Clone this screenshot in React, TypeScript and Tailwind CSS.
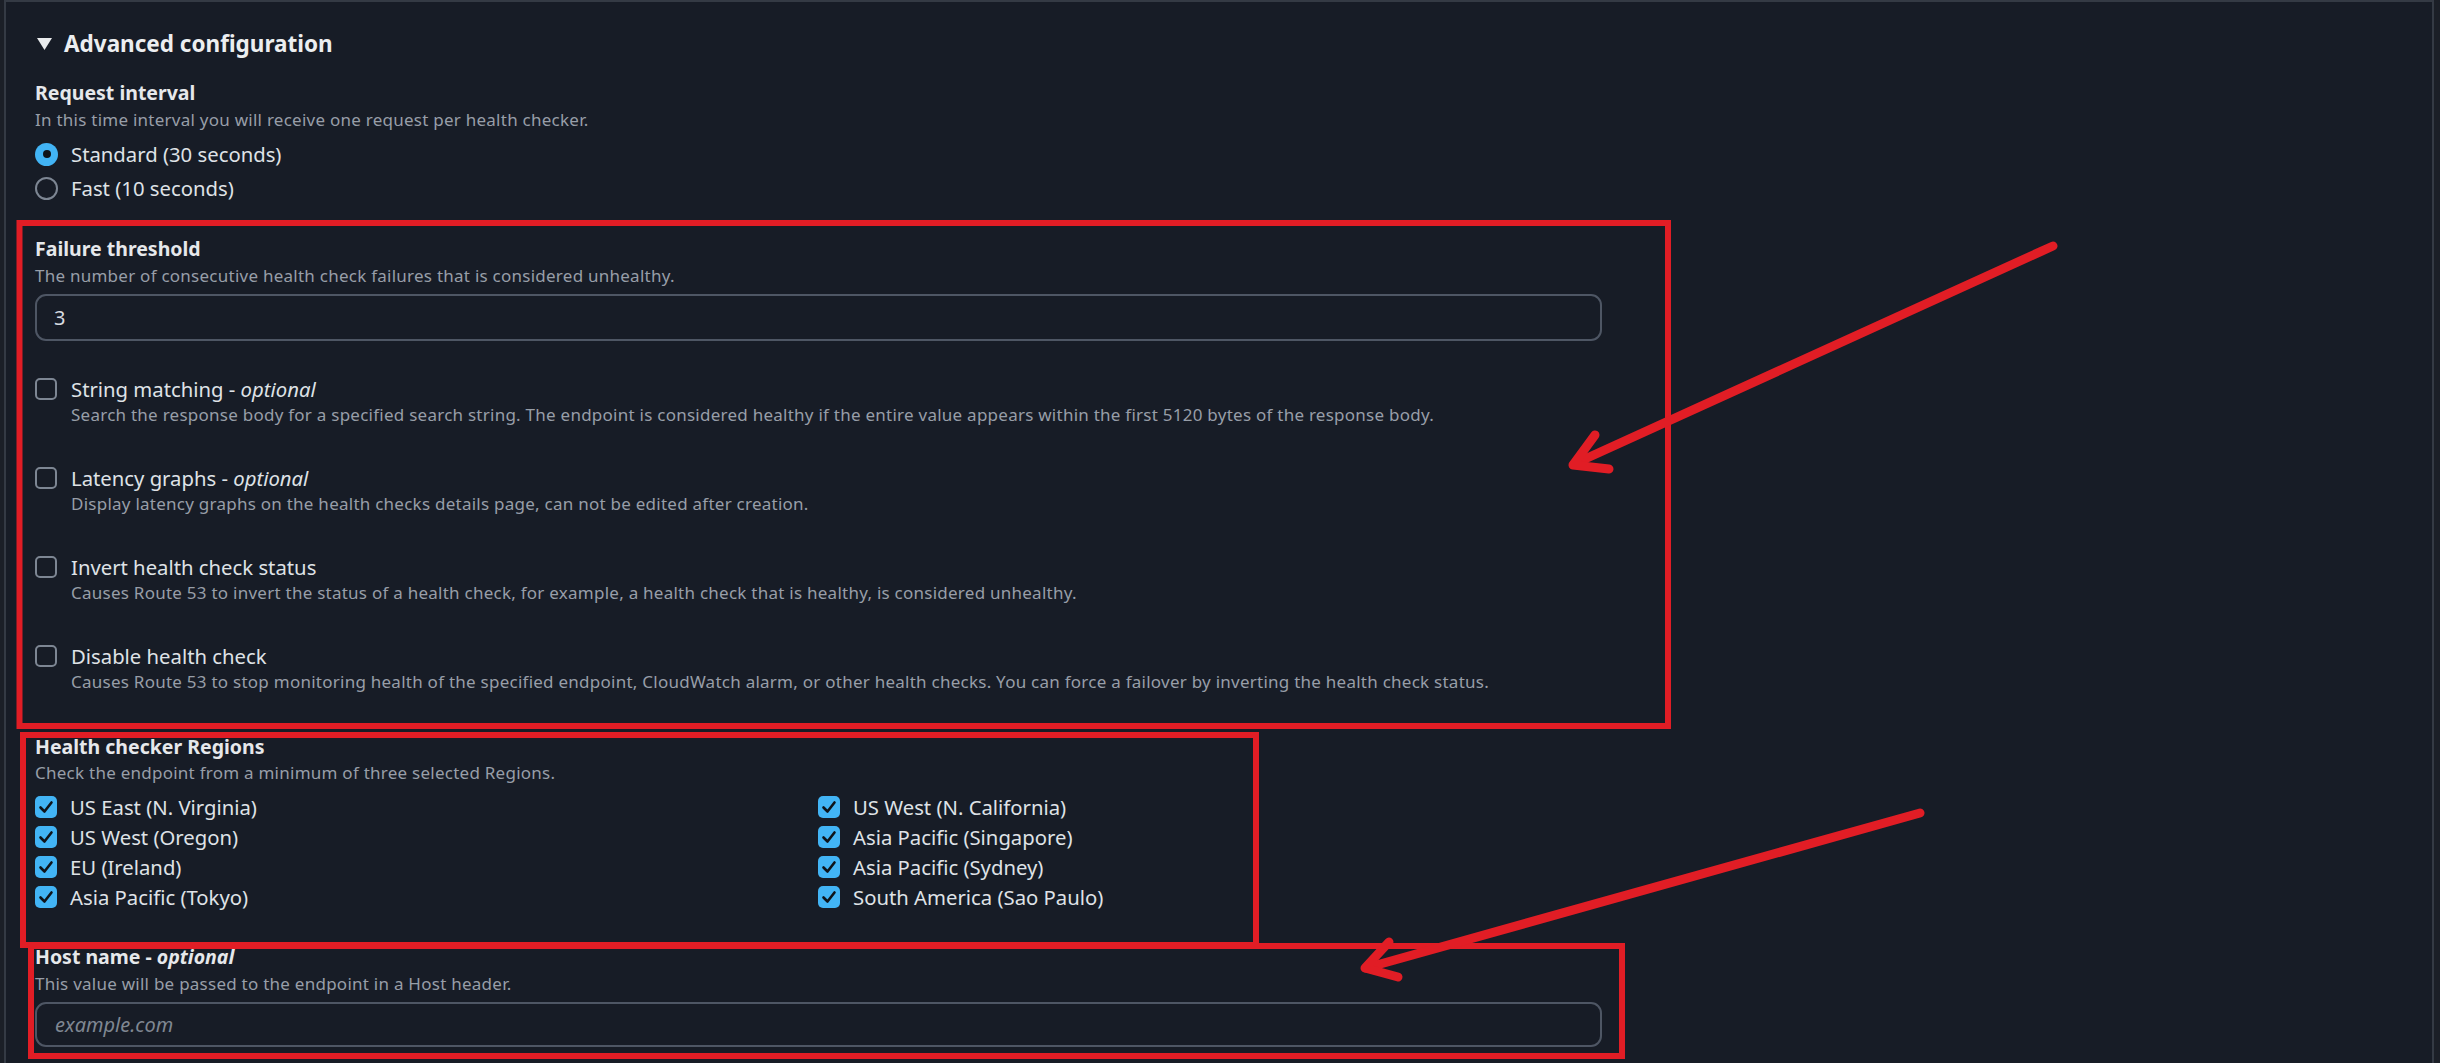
import React, { useState } from "react";

const font = { fontFamily: '"Noto Sans", "Open Sans", sans-serif' };

const CheckMark = () => (
  <svg width="22" height="22" viewBox="0 0 22 22">
    <polyline
      points="5.5,11.5 9.5,15.5 16.5,6.5"
      fill="none"
      stroke="#0f141a"
      strokeWidth="2.6"
      strokeLinecap="round"
      strokeLinejoin="round"
    />
  </svg>
);

const Checkbox = ({ checked }: { checked: boolean }) =>
  checked ? (
    <div className="w-[22px] h-[22px] rounded-[5px] bg-[#42b4f5] shrink-0">
      <CheckMark />
    </div>
  ) : (
    <div className="w-[22px] h-[22px] rounded-[5px] border-2 border-[#7d8693] shrink-0" />
  );

const Radio = ({ checked }: { checked: boolean }) =>
  checked ? (
    <div className="w-[23px] h-[23px] rounded-full bg-[#42b4f5] flex items-center justify-center shrink-0">
      <div className="w-[8px] h-[8px] rounded-full bg-[#0f141a]" />
    </div>
  ) : (
    <div className="w-[23px] h-[23px] rounded-full border-2 border-[#7d8693] shrink-0" />
  );

const options = [
  {
    label: "String matching",
    optional: true,
    desc: "Search the response body for a specified search string. The endpoint is considered healthy if the entire value appears within the first 5120 bytes of the response body.",
  },
  {
    label: "Latency graphs",
    optional: true,
    desc: "Display latency graphs on the health checks details page, can not be edited after creation.",
  },
  {
    label: "Invert health check status",
    optional: false,
    desc: "Causes Route 53 to invert the status of a health check, for example, a health check that is healthy, is considered unhealthy.",
  },
  {
    label: "Disable health check",
    optional: false,
    desc: "Causes Route 53 to stop monitoring health of the specified endpoint, CloudWatch alarm, or other health checks. You can force a failover by inverting the health check status.",
  },
];

const leftRegions = [
  "US East (N. Virginia)",
  "US West (Oregon)",
  "EU (Ireland)",
  "Asia Pacific (Tokyo)",
];
const rightRegions = [
  "US West (N. California)",
  "Asia Pacific (Singapore)",
  "Asia Pacific (Sydney)",
  "South America (Sao Paulo)",
];

// red boxes + arrows drawn over the form
const Annotations = () => (
  <svg
    className="absolute left-0 top-0 pointer-events-none"
    width="2440"
    height="1063"
    viewBox="0 0 2440 1063"
  >
    <g fill="none" stroke="#e11d25" strokeWidth="6">
      <rect x="19.5" y="223" width="1648.5" height="503" />
      <rect x="23" y="735" width="1233" height="210" />
      <rect x="31" y="946" width="1591" height="110" />
    </g>
    <g fill="none" stroke="#e11d25" strokeWidth="9" strokeLinecap="round" strokeLinejoin="round">
      <line x1="2053" y1="246" x2="1574" y2="464" />
      <polyline points="1595,435 1573,465 1609,469" />
      <line x1="1920" y1="813" x2="1366" y2="968" />
      <polyline points="1389,942 1365,968 1398,977" />
    </g>
  </svg>
);

const labelCls = "text-[19.5px] leading-[22px] font-bold text-[#e6e8eb]";
const descCls = "text-[17px] leading-[20px] tracking-[0.25px] text-[#979ea8]";
const bodyCls = "text-[20.3px] leading-[22px] text-[#dfe2e6]";

export default function App() {
  const [interval, setInterval] = useState("standard");
  const [threshold, setThreshold] = useState("3");
  const [host, setHost] = useState("");

  return (
    <div className="relative w-[2440px] h-[1063px] bg-[#1b1f27] overflow-hidden" style={font}>
      <div className="ml-[4px] mr-[6px] h-full bg-[#171c26] border-t-2 border-x-2 border-[#343a44] pl-[29px] pt-[28px]">
        <div className="flex items-center h-[28px]">
          <svg width="15" height="12" viewBox="0 0 15 12" className="mr-[12px] ml-[2px]">
            <polygon points="0,0 15,0 7.5,12" fill="#e9ebed" />
          </svg>
          <h2 className="text-[22.5px] leading-[28px] font-bold text-[#eceef0]">Advanced configuration</h2>
        </div>

        <div className={`mt-[24px] ${labelCls}`}>Request interval</div>
        <div className={`mt-[6px] ${descCls}`}>
          In this time interval you will receive one request per health checker.
        </div>
        <div className="mt-[7px]">
          <div
            className="flex items-center h-[34px] gap-[13px] cursor-pointer"
            onClick={() => setInterval("standard")}
          >
            <Radio checked={interval === "standard"} />
            <span className={bodyCls}>Standard (30 seconds)</span>
          </div>
          <div
            className="flex items-center h-[34px] gap-[13px] cursor-pointer"
            onClick={() => setInterval("fast")}
          >
            <Radio checked={interval === "fast"} />
            <span className={bodyCls}>Fast (10 seconds)</span>
          </div>
        </div>

        <div className={`mt-[33px] ${labelCls}`}>Failure threshold</div>
        <div className={`mt-[6px] ${descCls}`}>
          The number of consecutive health check failures that is considered unhealthy.
        </div>
        <input
          value={threshold}
          onChange={(e) => setThreshold(e.target.value)}
          className="mt-[8px] block w-[1567px] h-[47px] rounded-[11px] border-2 border-[#4e5664] bg-transparent pl-[17px] text-[20px] text-[#d7dbe0] outline-none"
        />

        <div className="mt-[37px] flex flex-col gap-[42px]">
          {options.map((o) => (
            <div key={o.label} className="flex gap-[14px]">
              <Checkbox checked={false} />
              <div>
                <div className={bodyCls}>
                  {o.label}
                  {o.optional && (
                    <>
                      {" - "}
                      <i>optional</i>
                    </>
                  )}
                </div>
                <div className={`mt-[5px] ${descCls}`}>{o.desc}</div>
              </div>
            </div>
          ))}
        </div>

        <div className={`mt-[44px] ${labelCls}`}>Health checker Regions</div>
        <div className={`mt-[5px] ${descCls}`}>
          Check the endpoint from a minimum of three selected Regions.
        </div>
        <div className="mt-[9px] flex">
          {[leftRegions, rightRegions].map((col, i) => (
            <div key={i} className={i === 0 ? "w-[783px]" : ""}>
              {col.map((r) => (
                <div key={r} className="flex items-center h-[30px] gap-[13px]">
                  <Checkbox checked={true} />
                  <span className={bodyCls}>{r}</span>
                </div>
              ))}
            </div>
          ))}
        </div>

        <div className={`mt-[34px] ${labelCls}`}>
          Host name - <i>optional</i>
        </div>
        <div className={`mt-[6px] ${descCls}`}>
          This value will be passed to the endpoint in a Host header.
        </div>
        <input
          value={host}
          onChange={(e) => setHost(e.target.value)}
          placeholder="example.com"
          className="mt-[8px] block w-[1567px] h-[45px] rounded-[11px] border-2 border-[#4e5664] bg-transparent pl-[18px] text-[20px] text-[#d7dbe0] placeholder:italic placeholder:text-[#7f8792] outline-none"
        />
      </div>
      <Annotations />
    </div>
  );
}
